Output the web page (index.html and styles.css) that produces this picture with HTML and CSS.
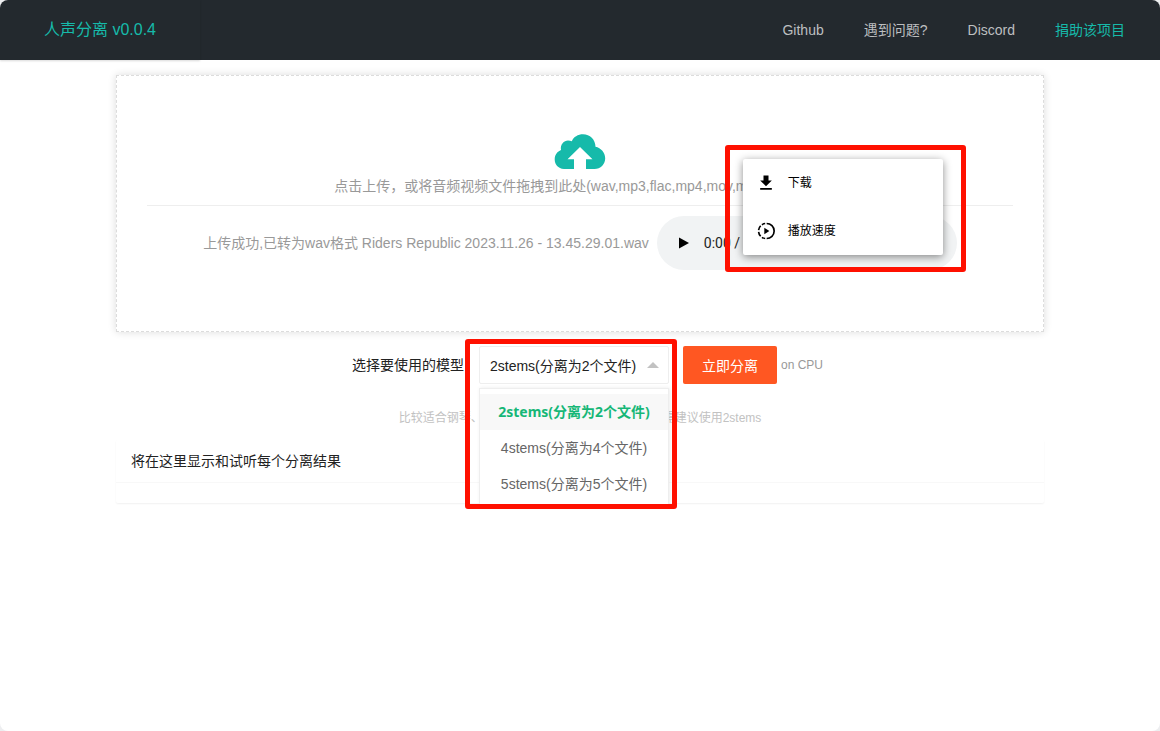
FILE: index.html
```html
<!DOCTYPE html>
<html lang="zh-CN">
<head>
<meta charset="utf-8">
<meta name="viewport" content="width=device-width, initial-scale=1">
<title>人声分离 v0.0.4</title>
<link rel="stylesheet" href="styles.css">
</head>
<body>
<div class="window">
  <header class="header">
    <div class="brand">人声分离 v0.0.4</div>
    <nav class="nav">
      <a class="nav-link" href="#github">Github</a>
      <a class="nav-link" href="#help">遇到问题?</a>
      <a class="nav-link" href="#discord">Discord</a>
      <a class="nav-link nav-accent" href="#donate">捐助该项目</a>
    </nav>
  </header>

  <main class="container">
    <section class="upload">
      <svg class="cloud" viewBox="0 0 52 36" aria-hidden="true">
        <path fill="#16baaa" d="M10 35C4 34.500 0.700 30.500 0.700 25.500C0.700 20.500 3.500 17.500 7 16C6 10.500 10 6.500 14 6.500C15.500 6.500 16.800 6.800 17.800 7.200C19.500 3 24 0.300 29 0.300C36 0.300 41.300 5.500 41.500 12.800C47 14 51.200 18.500 51.200 24.300C51.200 30.500 46.500 35 40.500 35H32V25.300H38.500L26 13L13.500 25.300H20V35Z"/>
      </svg>
      <p class="upload-tip">点击上传，或将音频视频文件拖拽到此处(wav,mp3,flac,mp4,mov,mkv,avi,mpeg)</p>
      <hr class="divider">
      <div class="result-row">
        <span class="upload-status">上传成功,已转为wav格式 Riders Republic 2023.11.26 - 13.45.29.01.wav</span>
        <div class="player-wrap">
          <div class="player">
            <button class="play" type="button" aria-label="播放">
              <svg viewBox="0 0 10 12" width="10" height="12"><path d="M0 0.500L10 6L0 11.500Z"/></svg>
            </button>
            <span class="time">0:00 /</span>
          </div>
          <div class="menu-frame">
            <div class="menu">
              <button class="menu-item" type="button">
                <svg viewBox="0 0 24 24" width="20" height="20"><path d="M19 9h-4V3H9v6H5l7 7 7-7zM5 18v2h14v-2H5z"/></svg>
                <span>下载</span>
              </button>
              <button class="menu-item" type="button">
                <svg viewBox="0 0 24 24" width="20" height="20"><path d="M10 8v8l6-4-6-4z"/><g fill="none" stroke="#000" stroke-width="2"><path d="M12.800 3A9 9 0 0 1 12.800 21"/><path d="M11 3.050A9 9 0 0 0 7.100 4.500M5.600 5.700A9 9 0 0 0 3.100 10.900M3.100 13A9 9 0 0 0 5.600 18.300M7.100 19.600A9 9 0 0 0 11 20.950"/></g></svg>
                <span>播放速度</span>
              </button>
            </div>
          </div>
        </div>
      </div>
    </section>

    <form class="controls">
      <label class="model-label" for="model">选择要使用的模型</label>
      <div class="model">
        <select class="model-select" id="model">
          <option>2stems(分离为2个文件)</option>
          <option>4stems(分离为4个文件)</option>
          <option>5stems(分离为5个文件)</option>
        </select>
        <span class="caret"></span>
        <div class="list-frame"></div>
        <ul class="list" role="listbox" aria-label="选择要使用的模型">
          <li class="list-item is-selected" role="option" aria-selected="true">2stems(分离为2个文件)</li>
          <li class="list-item" role="option" aria-selected="false">4stems(分离为4个文件)</li>
          <li class="list-item" role="option" aria-selected="false">5stems(分离为5个文件)</li>
        </ul>
      </div>
      <button class="start" type="button">立即分离</button>
      <span class="device">on CPU</span>
    </form>
    <p class="hint">比较适合钢琴、贝斯、鼓等器乐声的分离，如无特需建议使用2stems</p>

    <section class="card">
      <h2 class="card-title">将在这里显示和试听每个分离结果</h2>
      <div class="card-body"></div>
    </section>
  </main>
</div>
</body>
</html>
```
FILE: styles.css
```css
* { box-sizing: border-box; }

body {
  margin: 0;
  background: #edeef0;
  font: 14px/24px "Liberation Sans", "Noto Sans CJK SC", sans-serif;
  color: #222;
}

button, select { font: inherit; }

.window {
  min-height: 100vh;
  background: #fff;
  border-radius: 8px;
  overflow: hidden;
}

.header {
  display: flex;
  justify-content: space-between;
  height: 60px;
  background: #23292e;
  line-height: 60px;
}

.brand {
  width: 200px;
  text-align: center;
  font-size: 16px;
  color: #16baaa;
  box-shadow: 0 1px 2px rgba(0, 0, 0, .15);
}

.nav { display: flex; padding-right: 15px; }
.nav-link { padding: 0 20px; color: #bdbfc0; text-decoration: none; }
.nav-accent { color: #16baaa; }

.container { width: 80%; margin: 0 auto; padding-top: 15px; }

.upload {
  padding: 58px 30px 60px;
  border: 1px dashed #dcdcdc;
  box-shadow: 0 0 8px rgba(0, 0, 0, .14);
  text-align: center;
  color: #999;
}

.cloud { display: block; width: 52px; height: 36px; margin: 0 auto; }
.upload-tip { margin: 4px 0 7px; }
.divider { height: 1px; margin: 0 0 10px; border: 0; background: #eee; }

.result-row { display: flex; justify-content: center; align-items: center; gap: 8px; padding-bottom: 1px; white-space: nowrap; }

.player-wrap { position: relative; width: 300px; }
.player {
  display: flex;
  align-items: center;
  gap: 15px;
  height: 54px;
  padding-left: 22px;
  border-radius: 27px;
  background: #f1f3f4;
  color: #222;
}
.play { display: flex; padding: 0; border: 0; background: none; }
.time { font-family: Roboto, sans-serif; }

.menu-frame {
  position: absolute;
  right: -9px;
  bottom: -2px;
  width: 241px;
  padding: 9px 18px 12px 13px;
  border: 5px solid #ff1000;
  border-radius: 3px;
}
.menu {
  border-radius: 2px;
  background: #fff;
  box-shadow: 0 2px 8px rgba(0, 0, 0, .45);
}
.menu-item {
  display: flex;
  align-items: center;
  gap: 12px;
  width: 100%;
  height: 48px;
  padding: 0 13px;
  border: 0;
  background: none;
  font-size: 12px;
  color: #000;
}

.controls {
  display: flex;
  justify-content: center;
  align-items: center;
  margin-top: 14px;
  padding-left: 15px;
}
.model { position: relative; width: 190px; margin: 0 14px 0 15px; }
.model-select {
  display: block;
  width: 100%;
  height: 38px;
  padding: 2px 30px 0 10px;
  border: 1px solid #eee;
  border-radius: 2px;
  appearance: none;
  background: #fff;
  color: #222;
}
.caret {
  position: absolute;
  top: 16px;
  right: 10px;
  border: 6px solid transparent;
  border-top: 0;
  border-bottom-color: #c2c2c2;
}
.list {
  position: absolute;
  z-index: 2;
  top: 42px;
  left: 0;
  width: 100%;
  height: 116px;
  margin: 0;
  padding: 5px 0 0;
  border: 1px solid #eee;
  border-bottom: 0;
  background: #fff;
  box-shadow: 1px 0 4px rgba(0, 0, 0, .08);
  list-style: none;
}
.list-item { height: 36px; line-height: 36px; text-align: center; color: #666; }
.is-selected {
  background: #f8f8f8;
  color: #16b777;
  font-family: "Noto Sans", "Noto Sans CJK SC", sans-serif;
  font-weight: 700;
}
.list-frame {
  position: absolute;
  z-index: 3;
  top: -7px;
  left: -14px;
  width: 212px;
  height: 170px;
  border: 5px solid #ff1000;
  border-radius: 3px;
  pointer-events: none;
}
.start {
  height: 38px;
  padding: 2px 19px 0;
  border: 0;
  border-radius: 2px;
  background: #ff5722;
  color: #fff;
}
.device { margin-left: 4px; font-size: 12px; color: #999; }

.hint { margin: 22px 0 10px; text-align: center; font-size: 12px; color: #c2c2c2; }

.card { border-radius: 2px; box-shadow: 0 1px 2px rgba(0, 0, 0, .06); }
.card-title {
  margin: 0;
  padding: 0 15px;
  border-bottom: 1px solid #f8f8f8;
  font-size: 14px;
  font-weight: 400;
  line-height: 42px;
}
.card-body { height: 20px; }
```
